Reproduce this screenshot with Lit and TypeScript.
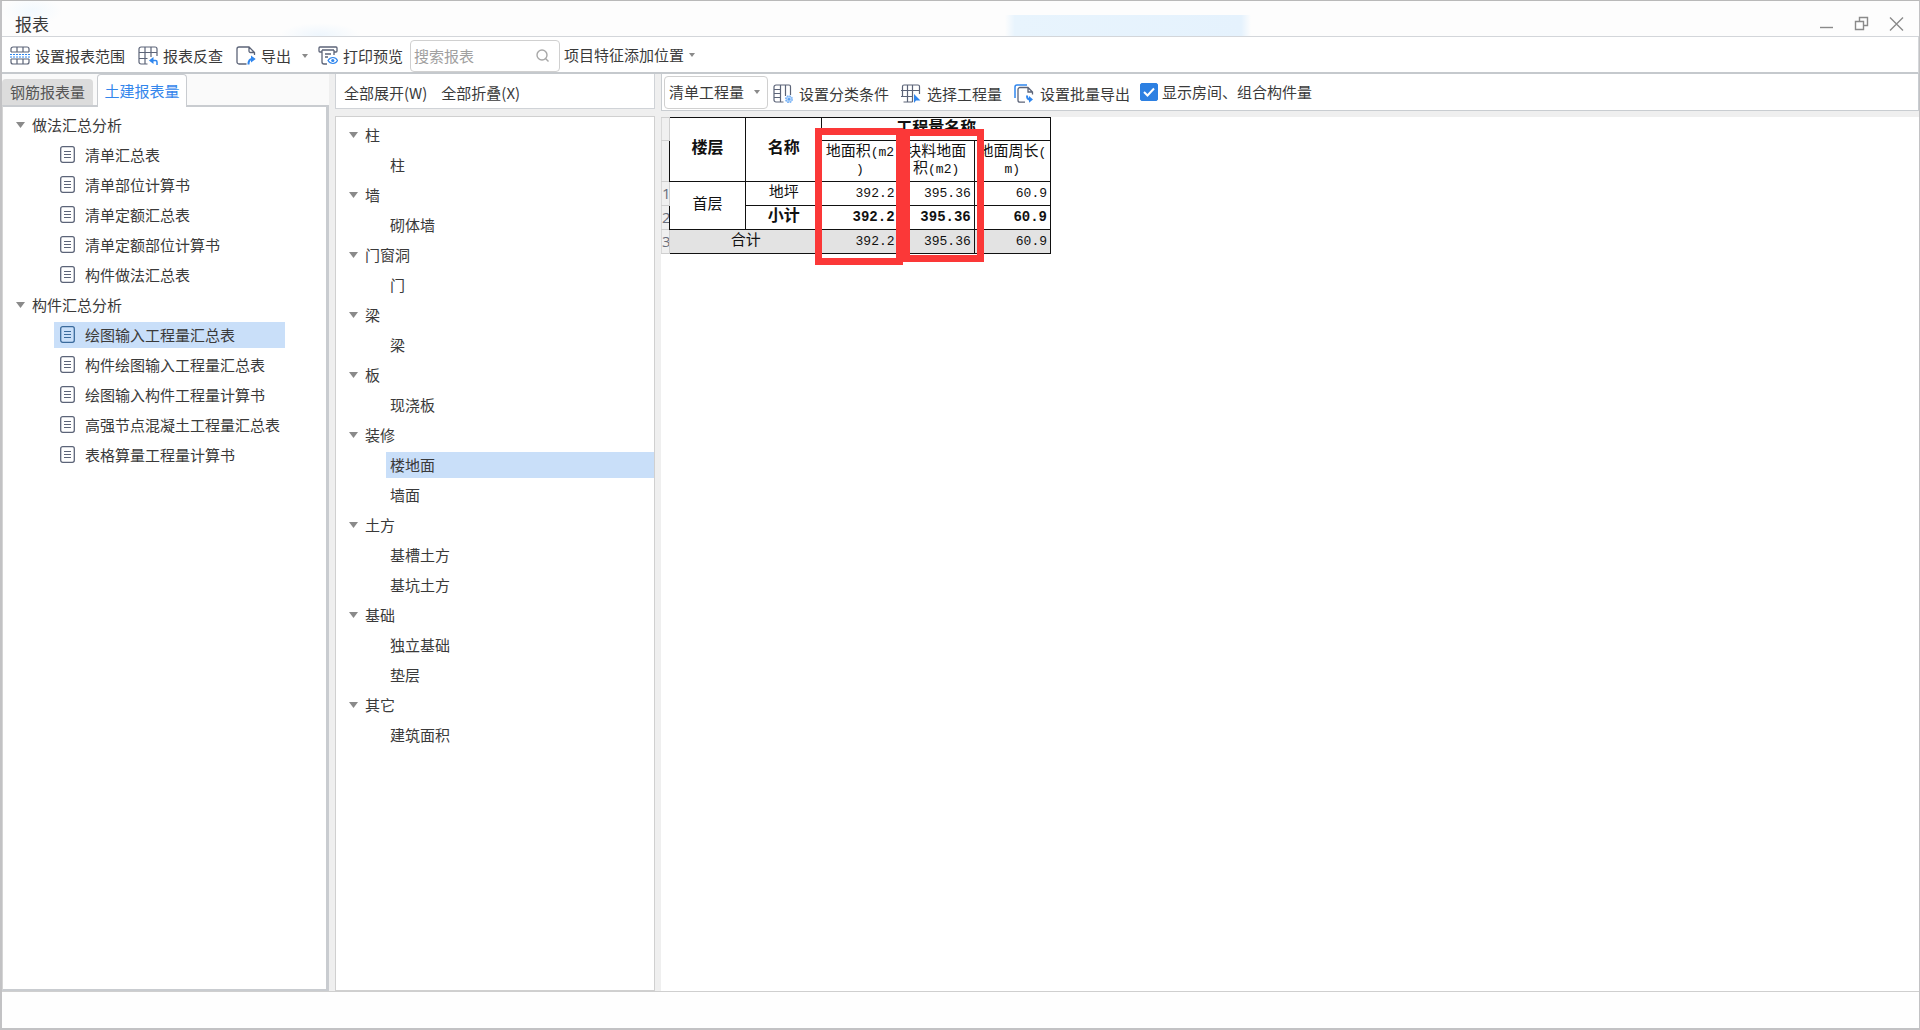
import { LitElement, html, css, svg, nothing } from "lit";
import { customElement, property, state } from "lit/decorators.js";
import { classMap } from "lit/directives/class-map.js";

type Group = { name: string; items: string[] };

const REPORTS: Group[] = [
  { name: "做法汇总分析", items: ["清单汇总表", "清单部位计算书", "清单定额汇总表", "清单定额部位计算书", "构件做法汇总表"] },
  {
    name: "构件汇总分析",
    items: ["绘图输入工程量汇总表", "构件绘图输入工程量汇总表", "绘图输入构件工程量计算书", "高强节点混凝土工程量汇总表", "表格算量工程量计算书"],
  },
];

const COMPONENTS: Group[] = [
  { name: "柱", items: ["柱"] },
  { name: "墙", items: ["砌体墙"] },
  { name: "门窗洞", items: ["门"] },
  { name: "梁", items: ["梁"] },
  { name: "板", items: ["现浇板"] },
  { name: "装修", items: ["楼地面", "墙面"] },
  { name: "土方", items: ["基槽土方", "基坑土方"] },
  { name: "基础", items: ["独立基础", "垫层"] },
  { name: "其它", items: ["建筑面积"] },
];

const GREY = "#5c6478";
const BLUE = "#2f86ee";

const ICONS: Record<string, unknown> = {
  range: svg`<g fill="none" stroke=${GREY} stroke-width="1.2">
      <path d="M1 6V3a2 2 0 0 1 2-2h14a2 2 0 0 1 2 2v3M1 13v3a2 2 0 0 0 2 2h14a2 2 0 0 0 2-2v-3M7 1v5M13 1v5M7 13v5M13 13v5M1 6h18M1 13h18"/></g>
      <path d="M0 8.500h20M0 11h20" fill="none" stroke=${BLUE} stroke-width="1" stroke-dasharray="2 1"/>`,
  check: svg`<g fill="none" stroke=${GREY} stroke-width="1.200">
      <path d="M9.500 18H3a2 2 0 0 1-2-2V3a2 2 0 0 1 2-2h14a2 2 0 0 1 2 2v7M7 1v17M13 1v10M1 6.500h18M1 12.500h8.500"/></g>
      <path d="M19 19v-3a1.500 1.500 0 0 0-1.500-1.500H12.500" fill="none" stroke=${BLUE} stroke-width="1.500"/><path d="M15.500 11v7l-4.500-3.500z" fill=${BLUE}/>`,
  export: svg`<path d="M10.500 18H3a2 2 0 0 1-2-2V3a2 2 0 0 1 2-2h10l5.500 5.500V9M13 1v4a1.500 1.500 0 0 0 1.500 1.500H18.500" fill="none" stroke=${GREY} stroke-width="1.300"/>
      <path d="M12.500 18.500c0-4 1-5.500 3.500-5.500" fill="none" stroke=${BLUE} stroke-width="2"/><path d="M15 9.500l4.700 3.500-4.700 3.600z" fill=${BLUE}/>`,
  print: svg`<g fill="none" stroke=${GREY} stroke-width="1.300">
      <path d="M4 6H2a1 1 0 0 1-1-1V2a1 1 0 0 1 1-1h16a1 1 0 0 1 1 1v3a1 1 0 0 1-1 1h-2M4 4h12M4 4v12a2 2 0 0 0 2 2h3M16 4v5M7 8h6M7 11h3"/></g>
      <path d="M10 14.500c2.500-4 7.500-4 9.500 0-2 4-7 4-9.500 0z" fill="#fff" stroke=${BLUE} stroke-width="1.200"/><circle cx="14.800" cy="14.500" r="1.600" fill=${BLUE}/>`,
  classify: svg`<path d="M10.500 18H3a2 2 0 0 1-2-2V3a2 2 0 0 1 2-2h13a1.500 1.500 0 0 1 1.500 1.500V11M7.500 1v17M12.500 1v11M1 5.500h6.500M1 9.500h6.500M1 13.500h6.500" fill="none" stroke=${GREY} stroke-width="1.200"/>
      <circle cx="16" cy="15.200" r="3.200" fill="#b5d6fb" stroke="#79b2f5" stroke-width="1.600" stroke-dasharray="1.600 .9"/><circle cx="16" cy="15.200" r="1.200" fill="#5aa0f2"/>`,
  pick: svg`<path d="M11.500 12.500V1M6.500 1v17M11.500 18V12M11.500 18H2.500M18.500 10V2.500A1.500 1.500 0 0 0 17 1H3a1.500 1.500 0 0 0-1.500 1.500V12.500M0 6.500h18.500M0 12.500h11.500" fill="none" stroke=${GREY} stroke-width="1.200"/>
      <path d="M13 10v9l2-2.500h4.500z" fill=${BLUE}/>`,
  batch: svg`<path d="M1 14V3a2 2 0 0 1 2-2h10" fill="none" stroke=${BLUE} stroke-width="1.500"/>
      <path d="M11 18.200H6a2 2 0 0 1-2-2V5.500a2 2 0 0 1 2-2h8L18.500 8v2.500M14 3.500V8H18.500" fill="none" stroke=${GREY} stroke-width="1.300"/>
      <path d="M13 11.500c0 3 .8 4 3 4" fill="none" stroke=${BLUE} stroke-width="2"/><path d="M15 12l4 3.500-4 3.300z" fill=${BLUE}/>`,
};

const icon = (name: string) => html`<svg class="icon" viewBox="0 0 20 19" aria-hidden="true">${ICONS[name]}</svg>`;
const caret = () => html`<svg class="caret" viewBox="0 0 6 4" aria-hidden="true"><path d="M0 0h6L3 4z" fill="currentColor" /></svg>`;

const shared = css`
  * { box-sizing: border-box; }
  button, input, select {
    font: inherit;
    color: inherit;
    margin: 0;
    padding: 0;
    border: 0;
    background: none;
  }
  button { cursor: pointer; white-space: nowrap; }
`;

@customElement("tree-list")
export class TreeList extends LitElement {
  static styles = [
    shared,
    css`
      :host { display: block; }
      ul { list-style: none; margin: 0; padding: 0; }
      .row {
        display: flex;
        align-items: center;
        width: 100%;
        height: 30px;
        text-align: left;
      }
      .group { padding-left: 13px; gap: 7px; }
      .arrow { width: 9px; height: 6px; color: #8a8a8a; }
      .leaf { padding-left: 51px; }
      .label {
        display: flex;
        align-items: center;
        flex: 1;
        height: 26px;
        padding-left: 4px;
      }
      .filed .label { flex: none; padding: 0 5px 0 6px; gap: 10px; }
      .filed .current .label { min-width: 231px; }
      .current .label { background: #c9dff9; }
      .doc { width: 15px; height: 17px; margin-bottom: 2px; color: #5c6478; }
      .current .doc { color: #3a6a9c; }
      .plain .leaf { padding-left: 50px; }
    `,
  ];

  @property({ attribute: false }) groups: Group[] = [];
  @property() selected = "";
  @property({ type: Boolean }) filed = false;
  @state() private closed = new Set<string>();

  private toggle(name: string) {
    const next = new Set(this.closed);
    if (!next.delete(name)) next.add(name);
    this.closed = next;
  }

  render() {
    return html`<ul class=${this.filed ? "filed" : "plain"}>
      ${this.groups.map(
        (g) => html`<li>
          <button class="row group" aria-expanded=${!this.closed.has(g.name)} @click=${() => this.toggle(g.name)}>
            <svg class="arrow" viewBox="0 0 9 6" aria-hidden="true"><path d="M0 0h9L4.500 6z" fill="currentColor" /></svg>${g.name}
          </button>
          ${this.closed.has(g.name)
            ? nothing
            : html`<ul>
                ${g.items.map(
                  (item) => html`<li>
                    <button class=${classMap({ row: true, leaf: true, current: item === this.selected })} @click=${() => (this.selected = item)}>
                      <span class="label">
                        ${this.filed
                          ? html`<svg class="doc" viewBox="0 0 15 17" aria-hidden="true">
                              <rect x=".7" y=".7" width="13.6" height="15.6" rx="2" fill="none" stroke="currentColor" stroke-width="1.3" />
                              <path d="M4 5.500h7M4 8.500h7M4 11.500h7" stroke="currentColor" stroke-width="1.2" />
                            </svg>`
                          : nothing}
                        ${item}
                      </span>
                    </button>
                  </li>`
                )}
              </ul>`}
        </li>`
      )}
    </ul>`;
  }
}

@customElement("quantity-table")
export class QuantityTable extends LitElement {
  static styles = css`
    :host { display: block; }
    .sheet { position: relative; width: 390px; }
    table {
      width: 390px;
      table-layout: fixed;
      border-collapse: collapse;
      font: 15px/17px "Liberation Mono", "Noto Sans CJK SC", monospace;
      color: #111;
    }
    .c-index { width: 8px; }
    th, td { padding: 0; border: 1px solid #111; text-align: center; font-weight: 400; overflow: hidden; white-space: nowrap; }
    .index {
      border-color: #cfcfcf #111 #cfcfcf #d8d8d8;
      background: #f0f0f0;
      font-family: "Open Sans", "Noto Sans", sans-serif;
      color: #6a6f7c;
      border-right-color: #cfcfcf;
    }
    .strong { font-weight: 700; font-size: 16px; }
    .num { text-align: right; padding-right: 3px; font-size: 13px; }
    .bold .num { font-size: 14px; font-weight: 700; }
    .lat { font-size: 13px; }
    .total { background: #e3e3e3; }
    .h-title { height: 23px; }
    .h-names { height: 41px; }
    .h-row { height: 24px; }
    .mark { position: absolute; box-sizing: border-box; border: 7px solid #fb3838; pointer-events: none; }
    .mark-a { left: 154px; top: 11px; width: 88px; height: 137px; }
    .mark-b { left: 242px; top: 12px; width: 81px; height: 133px; }
  `;

  render() {
    return html`<div class="sheet">
      <table>
        <colgroup><col class="c-index" /><col /><col /><col /><col /><col /></colgroup>
        <thead>
          <tr class="h-title">
            <td class="index"></td>
            <th class="strong" rowspan="2">楼层</th>
            <th class="strong" rowspan="2">名称</th>
            <th class="strong" colspan="3">工程量名称</th>
          </tr>
          <tr class="h-names">
            <td class="index"></td>
            <th>地面积<span class="lat">(m2<br />)</span></th>
            <th>块料地面<br />积<span class="lat">(m2)</span></th>
            <th>地面周长<span class="lat">(<br />m)</span></th>
          </tr>
        </thead>
        <tbody>
          <tr class="h-row">
            <td class="index">1</td>
            <td rowspan="2">首层</td>
            <td>地坪</td>
            <td class="num">392.2</td>
            <td class="num">395.36</td>
            <td class="num">60.9</td>
          </tr>
          <tr class="h-row bold">
            <td class="index">2</td>
            <td class="strong">小计</td>
            <td class="num">392.2</td>
            <td class="num">395.36</td>
            <td class="num">60.9</td>
          </tr>
          <tr class="h-row">
            <td class="index">3</td>
            <td class="total" colspan="2">合计</td>
            <td class="num total">392.2</td>
            <td class="num total">395.36</td>
            <td class="num total">60.9</td>
          </tr>
        </tbody>
      </table>
      <div class="mark mark-a"></div>
      <div class="mark mark-b"></div>
    </div>`;
  }
}

@customElement("app-root")
export class AppRoot extends LitElement {
  static styles = [
    shared,
    css`
      :host {
        display: block;
        font: 15px/20px "Noto Sans CJK SC", sans-serif;
        color: #3a3a3a;
      }
      .window {
        display: flex;
        flex-direction: column;
        min-height: 100vh;
        background: #fff;
        border: 2px solid #c2c2c4;
        border-top: 1px solid #b9b9b9;
        border-right-width: 1px;
      }
      .title {
        display: flex;
        align-items: center;
        justify-content: space-between;
        height: 36px;
        padding: 10px 14px 0 13px;
        border-bottom: 1px solid #d3d6da;
        background:
          linear-gradient(90deg, transparent, #e8f4fd 4%, #e5f2fd 96%, transparent) 1003px 14px / 246px 22px no-repeat,
          radial-gradient(ellipse 40px 12px at 318px 34px, #eef6fd, transparent),
          radial-gradient(ellipse 30px 14px at 30px 10px, #f2f9fe, transparent),
          #fdfdfd;
      }
      .title h1 { margin: 0; font-size: 17px; line-height: 24px; font-weight: 400; }
      .controls { display: flex; gap: 18px; }
      .controls button { display: flex; width: 17px; height: 17px; }
      .controls svg { width: 17px; height: 17px; fill: none; stroke: #8a8a8a; stroke-width: 1.4; }
      .toolbar {
        display: flex;
        align-items: center;
        height: 37px;
        padding: 2px 0 0 8px;
        border-bottom: 2px solid #c5c9cd;
        border-right: 1px solid #d5d7da;
      }
      .tool { display: flex; align-items: center; gap: 5px; }
      .icon { width: 20px; height: 19px; flex: none; }
      .caret { width: 6px; height: 4px; flex: none; color: #8a8a8a; }
      .file-tools { display: flex; gap: 13px; padding-right: 7px; }
      .export { display: flex; align-items: center; gap: 11px; margin-right: -3px; }
      .search {
        display: flex;
        align-items: center;
        width: 150px;
        height: 32px;
        padding: 0 10px 0 3px;
        border: 1px solid #d0d0d0;
        border-radius: 4px;
      }
      .search input { flex: 1; min-width: 0; outline: none; }
      .search input::placeholder { color: #a0a0a0; opacity: 1; }
      .search svg { width: 13px; height: 13px; fill: none; stroke: #a8a8a8; stroke-width: 1.4; }
      .place { padding: 0 0 2px 4px; }
      .body {
        flex: 1;
        display: grid;
        grid-template-columns: 327px 320px minmax(0, 1fr);
        column-gap: 6px;
        background: #efefef;
      }
      .col { display: flex; flex-direction: column; min-width: 0; }
      .tabs { display: flex; align-items: flex-end; height: 31px; background: #fafafa; gap: 4px; }
      .tab {
        width: 91px;
        height: 26px;
        border-radius: 4px 4px 0 0;
        background: #dcdcdc;
        color: #555;
      }
      .tab.active {
        width: 90px;
        height: 33px;
        margin-bottom: -2px;
        background: #fff;
        border: 1px solid #c9ccd0;
        border-bottom: 0;
        color: #3386ec;
        z-index: 1;
      }
      .reports {
        flex: 1;
        padding-top: 3px;
        background: #fff;
        border: 2px solid #c9ccd0;
        border-left: 1px solid #d5d5d5;
        border-right-width: 3px;
      }
      .fold {
        display: flex;
        align-items: center;
        gap: 14px;
        height: 35px;
        padding: 3px 8px 0;
        border: 1px solid #d0d3d7;
        border-top: 0;
        background: #fff;
      }
      .parts {
        flex: 1;
        margin-top: 7px;
        padding-top: 3px;
        background: #fff;
        border: 1px solid #d0d0d0;
      }
      .options {
        display: flex;
        align-items: center;
        gap: 12px;
        height: 37px;
        padding: 0 2px;
        border: 1px solid #c9cdd1;
        border-top: 0;
        background: #fff;
      }
      .options .tool { padding-top: 3px; gap: 6px; }
      .kind { display: flex; align-items: center; height: 33px; width: 104px; margin-right: -7px; padding: 0 7px 0 4px; border: 1px solid #d0d0d0; border-radius: 4px; }
      .kind select { appearance: none; flex: 1; min-width: 0; outline: none; }
      .show { display: flex; align-items: center; gap: 4px; margin-left: -2px; }
      .show input {
        appearance: none;
        width: 18px;
        height: 18px;
        border-radius: 2px;
        border: 1px solid #2d80e2;
      }
      .show input:checked {
        background: #2d80e2 url("data:image/svg+xml,%3Csvg xmlns='http://www.w3.org/2000/svg' viewBox='0 0 16 16'%3E%3Cpath d='M3 8l3.500 3.500L13 4.500' fill='none' stroke='white' stroke-width='2'/%3E%3C/svg%3E");
      }
      .sheet-area { flex: 1; margin-top: 6px; background: #fff; }
      .status { height: 37px; border-top: 1px solid #cfcfcf; background: #fefefe; }
    `,
  ];

  render() {
    return html`<div class="window">
      <header class="title">
        <h1>报表</h1>
        <div class="controls">
          <button aria-label="最小化"><svg viewBox="0 0 17 17"><path d="M2 12.500h13" /></svg></button>
          <button aria-label="还原"><svg viewBox="0 0 17 17"><path d="M2.500 6.500h8v8h-8zM6.500 6.500v-4h8v8h-4" /></svg></button>
          <button aria-label="关闭"><svg viewBox="0 0 17 17"><path d="M2 2.500l13 13M15 2.500l-13 13" /></svg></button>
        </div>
      </header>
      <nav class="toolbar">
        <div class="file-tools">
          <button class="tool">${icon("range")}设置报表范围</button>
          <button class="tool">${icon("check")}报表反查</button>
          <div class="export">
            <button class="tool">${icon("export")}导出</button>
            <button aria-label="导出选项" class="tool">${caret()}</button>
          </div>
          <button class="tool">${icon("print")}打印预览</button>
        </div>
        <label class="search">
          <input type="text" placeholder="搜索报表" aria-label="搜索报表" />
          <svg viewBox="0 0 13 13" aria-hidden="true"><circle cx="6" cy="6" r="5" /><path d="M9.500 9.500l3 3" /></svg>
        </label>
        <button class="tool place">项目特征添加位置${caret()}</button>
      </nav>
      <main class="body">
        <section class="col">
          <div class="tabs" role="tablist">
            <button class="tab" role="tab" aria-selected="false">钢筋报表量</button>
            <button class="tab active" role="tab" aria-selected="true">土建报表量</button>
          </div>
          <div class="reports"><tree-list filed .groups=${REPORTS} selected="绘图输入工程量汇总表"></tree-list></div>
        </section>
        <section class="col">
          <div class="fold"><button>全部展开(W)</button><button>全部折叠(X)</button></div>
          <div class="parts"><tree-list .groups=${COMPONENTS} selected="楼地面"></tree-list></div>
        </section>
        <section class="col">
          <div class="options">
            <span class="kind"><select aria-label="工程量类型"><option>清单工程量</option></select>${caret()}</span>
            <button class="tool">${icon("classify")}设置分类条件</button>
            <button class="tool">${icon("pick")}选择工程量</button>
            <button class="tool">${icon("batch")}设置批量导出</button>
            <label class="show"><input type="checkbox" checked />显示房间、组合构件量</label>
          </div>
          <div class="sheet-area"><quantity-table></quantity-table></div>
        </section>
      </main>
      <footer class="status"></footer>
    </div>`;
  }
}
